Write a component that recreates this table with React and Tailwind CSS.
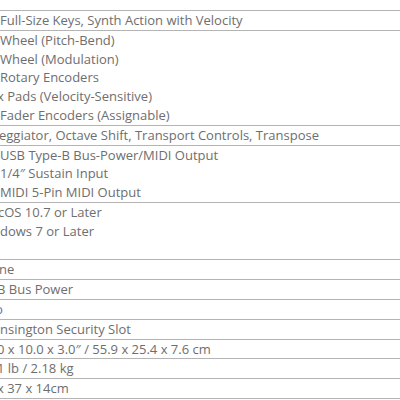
// Spec sheet table, cropped on the left side
const rows = [
  [{ t: 'Full-Size Keys, Synth Action with Velocity' }],
  [
    { t: 'Wheel (Pitch-Bend)' },
    { t: 'Wheel (Modulation)' },
    { t: 'Rotary Encoders' },
    { t: 'x Pads (Velocity-Sensitive)', cls: '-ml-[3px]' },
    { t: 'Fader Encoders (Assignable)' },
  ],
  [{ t: 'eggiator, Octave Shift, Transport Controls, Transpose', cls: '-ml-[1px]' }],
  [
    { t: 'USB Type-B Bus-Power/MIDI Output' },
    { t: '1/4″ Sustain Input' },
    { t: 'MIDI 5-Pin MIDI Output' },
  ],
  [
    { t: 'cOS 10.7 or Later', cls: '-ml-[2px]' },
    { t: 'dows 7 or Later' },
    { t: '\u00a0' },
  ],
  [{ t: 'ne', cls: '-ml-[1px]' }],
  [{ t: 'B Bus Power', cls: '-ml-[3px]' }],
  [{ t: 'o', cls: '-ml-[5px] text-[#2f7fc1]' }],
  [{ t: 'nsington Security Slot' }],
  [{ t: '0 x 10.0 x 3.0″ / 55.9 x 25.4 x 7.6 cm', cls: '-ml-[3px]' }],
  [{ t: '1 lb / 2.18 kg', cls: '-ml-[3px]' }],
  [{ t: 'x 37 x 14cm', cls: '-ml-[3px]' }],
];

export default function App() {
  return (
    <div
      className="w-[400px] h-[400px] overflow-hidden bg-white pt-[10px] text-[13px] leading-[18.8px] text-[#6e6e6e]"
      style={{ fontFamily: '"Open Sans", "Liberation Sans", sans-serif' }}
    >
      <div className="flex flex-col border-b border-[#b4b4b4]">
        {rows.map((lines, i) => (
          <div key={i} className="flex flex-col border-t border-[#b4b4b4]">
            {lines.map((l, j) => (
              <div key={j} className={'whitespace-nowrap ' + (l.cls || '')}>
                {l.t}
              </div>
            ))}
          </div>
        ))}
      </div>
    </div>
  );
}
